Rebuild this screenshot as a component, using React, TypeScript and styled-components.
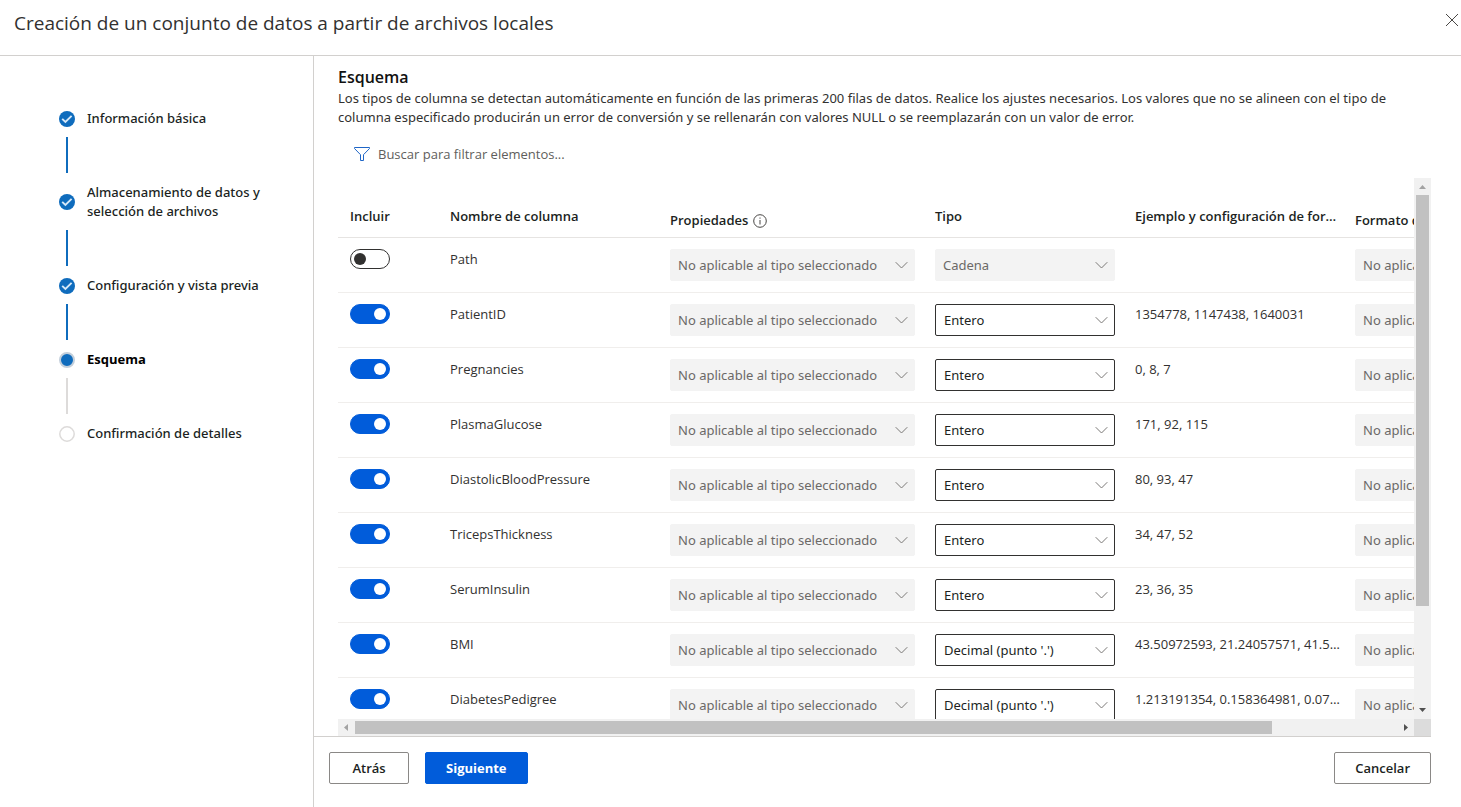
import React, { useId } from "react";
import styled, { createGlobalStyle, css } from "styled-components";

const wideText = `"Noto Sans", "Open Sans", sans-serif`;

const GlobalStyle = createGlobalStyle`
  *, *::before, *::after { box-sizing: border-box; }
  body {
    margin: 0;
    background: #fff;
    color: #323130;
    font-family: "Open Sans", "Noto Sans", sans-serif;
    font-size: 13px;
    line-height: 19px;
  }
  button, input, select { font: inherit; color: inherit; }
`;

const Page = styled.div`
  display: flex;
  flex-direction: column;
  height: 100vh;
  overflow: hidden;
`;

const Header = styled.header`
  display: flex;
  justify-content: space-between;
  align-items: flex-start;
  flex: none;
  height: 56px;
  padding: 9px 0 0 14px;
  border-bottom: 1px solid #d2d0ce;
`;

const Title = styled.h1`
  margin: 0;
  font-size: 19px;
  line-height: 28px;
  font-weight: 400;
`;

const CloseButton = styled.button`
  display: flex;
  padding: 4px 2px;
  border: 0;
  background: none;
`;

const Body = styled.div`
  display: flex;
  flex: 1;
  min-height: 0;
`;

const Sidebar = styled.nav`
  flex: none;
  width: 314px;
  padding: 53px 40px 0 59px;
  border-right: 1px solid #d2d0ce;
`;

const Steps = styled.ol`
  margin: 0;
  padding: 0;
  list-style: none;
`;

type StepState = "done" | "current" | "todo";

const Step = styled.li<{ $state: StepState }>`
  display: grid;
  grid-template-columns: 16px 1fr;
  column-gap: 12px;
  align-items: center;
  color: ${(p) => (p.$state === "current" ? "#000" : "#201f1e")};
  font-weight: ${(p) => (p.$state === "current" ? 700 : 500)};
  font-family: ${(p) => (p.$state === "current" ? "inherit" : wideText)};

  &:not(:last-child)::after {
    content: "";
    justify-self: center;
    width: 2px;
    height: 36px;
    margin: 9px 0 10px;
    background: ${(p) => (p.$state === "done" ? "#0f6cbd" : "#dddbda")};
  }
`;

const StepDot = styled.svg`
  display: block;
  width: 16px;
  height: 16px;
`;

const Main = styled.main`
  display: flex;
  flex-direction: column;
  flex: 1;
  min-width: 0;
  padding-right: 30px;
`;

const Content = styled.section`
  display: flex;
  flex-direction: column;
  flex: 1;
  min-height: 0;
  padding: 10px 0 0 24px;
`;

const Heading = styled.h2`
  margin: 0;
  font-size: 16px;
  line-height: 23px;
  font-weight: 600;
  color: #111;
`;

const Description = styled.p`
  margin: 0;
  font-family: ${wideText};
`;

const Filter = styled.label`
  display: flex;
  align-items: center;
  gap: 8px;
  flex: none;
  height: 32px;
  margin: 11px 0 8px;
  padding-left: 16px;
`;

const FilterInput = styled.input`
  width: 240px;
  padding: 0;
  border: 0;
  outline: 0;
  background: none;

  &::placeholder { color: #605e5c; opacity: 1; }
`;

const ScrollArea = styled.div`
  display: grid;
  grid-template: minmax(0, 1fr) 17px / minmax(0, 1fr) 17px;
  flex: 1;
  min-height: 0;
`;

const Viewport = styled.div`
  overflow: auto;
  scrollbar-width: none;
`;

const Track = styled.div<{ $vertical?: boolean }>`
  display: flex;
  flex-direction: ${(p) => (p.$vertical ? "column" : "row")};
  padding: ${(p) => (p.$vertical ? "0 2px" : "2px 0")};
  background: #f1f1f1;
`;

const Arrow = styled.svg`
  flex: none;
  width: 17px;
  height: 17px;
  align-self: center;
`;

const Rail = styled.div`
  display: flex;
  flex-direction: inherit;
  flex: 1;
`;

const Thumb = styled.div<{ $share: number }>`
  flex: 0 0 ${(p) => p.$share}%;
  background: #c1c1c1;
`;

const Corner = styled.div`
  background: #dcdcdc;
`;

const Table = styled.table`
  width: 100%;
  min-width: 1225px;
  table-layout: fixed;
  border-collapse: separate;
  border-spacing: 0;
`;

const Col = styled.col<{ $width: number }>`
  width: ${(p) => p.$width}px;
`;

const HeadCell = styled.th<{ $low?: boolean }>`
  height: 60px;
  padding: ${(p) => (p.$low ? "33px" : "29px")} 2px 0 12px;
  border-bottom: 1px solid #e6e4e2;
  vertical-align: top;
  text-align: left;
  font-weight: 600;
  color: #201f1e;
  white-space: nowrap;
  overflow: hidden;
  text-overflow: ellipsis;
`;

const HeadLabel = styled.span`
  display: flex;
  align-items: center;
  gap: 5px;
`;

const Cell = styled.td`
  height: 55px;
  padding: 11px 8px 0 12px;
  border-bottom: 1px solid #f0eeec;
  vertical-align: top;
`;

const TextCell = styled(Cell)`
  padding: 12px 2px 0 12px;
  white-space: nowrap;
  overflow: hidden;
  text-overflow: ellipsis;
`;

const Toggle = styled.input`
  appearance: none;
  display: flex;
  align-items: center;
  width: 40px;
  height: 20px;
  margin: 0;
  padding: 0 3px;
  border: 1px solid #323130;
  border-radius: 10px;
  background: #fff;

  &::before {
    content: "";
    width: 12px;
    height: 12px;
    border-radius: 50%;
    background: #323130;
  }

  &:checked {
    justify-content: flex-end;
    border-color: #015cda;
    background: #015cda;
  }

  &:checked::before { background: #fff; }
`;

const SelectBox = styled.div`
  position: relative;
`;

const NativeSelect = styled.select`
  appearance: none;
  display: block;
  width: 100%;
  height: 32px;
  padding: 0 28px 0 8px;
  border: 1px solid #323130;
  border-radius: 2px;
  background: #fff;
  color: #201f1e;
  font-family: ${wideText};

  &:disabled {
    padding-left: 7px;
    border-color: #f3f3f3;
    background: #f3f3f3;
    color: #6b6967;
    opacity: 1;
  }
`;

const Chevron = styled.svg`
  position: absolute;
  top: 10px;
  right: 7px;
  width: 13px;
  height: 12px;
  pointer-events: none;
`;

const Footer = styled.footer`
  display: flex;
  gap: 16px;
  flex: none;
  height: 71px;
  padding: 15px 0 0 15px;
  border-top: 1px solid #d2d0ce;
`;

const Button = styled.button<{ $primary?: boolean; $end?: boolean }>`
  height: 32px;
  min-width: 80px;
  padding: 0 20px;
  border: 1px solid #8a8886;
  border-radius: 2px;
  background: #fff;
  color: #201f1e;
  font-weight: 600;
  ${(p) => p.$end && css`margin-left: auto;`}
  ${(p) =>
    p.$primary &&
    css`
      border-color: #015cda;
      background: #015cda;
      color: #fff;
      font-weight: 700;
    `}
`;

const steps: { label: string; state: StepState }[] = [
  { label: "Información básica", state: "done" },
  { label: "Almacenamiento de datos y selección de archivos", state: "done" },
  { label: "Configuración y vista previa", state: "done" },
  { label: "Esquema", state: "current" },
  { label: "Confirmación de detalles", state: "todo" },
];

const NOT_APPLICABLE = "No aplicable al tipo seleccionado";

const rows = [
  { name: "Path", type: "Cadena", sample: "", included: false },
  { name: "PatientID", type: "Entero", sample: "1354778, 1147438, 1640031", included: true },
  { name: "Pregnancies", type: "Entero", sample: "0, 8, 7", included: true },
  { name: "PlasmaGlucose", type: "Entero", sample: "171, 92, 115", included: true },
  { name: "DiastolicBloodPressure", type: "Entero", sample: "80, 93, 47", included: true },
  { name: "TricepsThickness", type: "Entero", sample: "34, 47, 52", included: true },
  { name: "SerumInsulin", type: "Entero", sample: "23, 36, 35", included: true },
  { name: "BMI", type: "Decimal (punto '.')", sample: "43.50972593, 21.24057571, 41.51152348", included: true },
  { name: "DiabetesPedigree", type: "Decimal (punto '.')", sample: "1.213191354, 0.158364981, 0.079018568", included: true },
];

function StepIcon({ state }: { state: StepState }) {
  return (
    <StepDot viewBox="0 0 16 16" aria-hidden="true">
      {state === "done" && (
        <>
          <circle cx="8" cy="8" r="8" fill="#0f6cbd" />
          <path d="M3.2 7.800l3.200 3.200 6.200-6.200" fill="none" stroke="#d6e8f8" strokeWidth="1.900" />
        </>
      )}
      {state === "current" && (
        <circle cx="8" cy="8" r="7" fill="#0f6cbd" stroke="#c3cfdb" strokeWidth="2" />
      )}
      {state === "todo" && (
        <circle cx="8" cy="8" r="7.200" fill="#fff" stroke="#dddbda" strokeWidth="1.500" />
      )}
    </StepDot>
  );
}

function Select({ label, value, disabled }: { label: string; value: string; disabled?: boolean }) {
  const id = useId();
  return (
    <SelectBox>
      <NativeSelect id={id} aria-label={label} defaultValue={value} disabled={disabled}>
        <option>{value}</option>
      </NativeSelect>
      <Chevron viewBox="0 0 13 12" aria-hidden="true">
        <path d="M.7 3.200l5.800 5.800 5.800-5.800" fill="none" stroke="#7a7876" />
      </Chevron>
    </SelectBox>
  );
}

export default function App() {
  return (
    <Page>
      <GlobalStyle />
      <Header>
        <Title>Creación de un conjunto de datos a partir de archivos locales</Title>
        <CloseButton type="button" aria-label="Cerrar">
          <svg width="14" height="14" viewBox="0 0 14 14" aria-hidden="true">
            <path d="M1 1l12 12M13 1L1 13" stroke="#4a4846" />
          </svg>
        </CloseButton>
      </Header>
      <Body>
        <Sidebar>
          <Steps>
            {steps.map((s) => (
              <Step key={s.label} $state={s.state} aria-current={s.state === "current" ? "step" : undefined}>
                <StepIcon state={s.state} />
                <span>{s.label}</span>
              </Step>
            ))}
          </Steps>
        </Sidebar>
        <Main>
          <Content>
            <Heading>Esquema</Heading>
            <Description>
              Los tipos de columna se detectan automáticamente en función de las primeras 200 filas de datos. Realice
              los ajustes necesarios. Los valores que no se alineen con el tipo de columna especificado producirán un
              error de conversión y se rellenarán con valores NULL o se reemplazarán con un valor de error.
            </Description>
            <Filter>
              <svg width="16" height="16" viewBox="0 0 16 16" aria-hidden="true">
                <path d="M.5 1.500h15v1L9.500 8.700v5.800h-3V8.700L.5 2.500z" fill="none" stroke="#1f66c7" />
              </svg>
              <FilterInput type="text" placeholder="Buscar para filtrar elementos..." />
            </Filter>
            <ScrollArea>
              <Viewport>
                <Table>
                  <colgroup>
                    <Col $width={100} />
                    <Col $width={220} />
                    <Col $width={265} />
                    <Col $width={200} />
                    <Col $width={220} />
                    <Col $width={220} />
                  </colgroup>
                  <thead>
                    <tr>
                      <HeadCell>Incluir</HeadCell>
                      <HeadCell>Nombre de columna</HeadCell>
                      <HeadCell $low>
                        <HeadLabel>
                          Propiedades
                          <svg width="14" height="14" viewBox="0 0 14 14" aria-hidden="true">
                            <circle cx="7" cy="7" r="6.300" fill="none" stroke="#484644" />
                            <path d="M7 6v4.500M7 3.500v1.200" stroke="#484644" />
                          </svg>
                        </HeadLabel>
                      </HeadCell>
                      <HeadCell>Tipo</HeadCell>
                      <HeadCell>Ejemplo y configuración de formato</HeadCell>
                      <HeadCell $low>Formato de fecha</HeadCell>
                    </tr>
                  </thead>
                  <tbody>
                    {rows.map((r) => (
                      <tr key={r.name}>
                        <Cell>
                          <Toggle type="checkbox" role="switch" aria-label={`Incluir ${r.name}`} defaultChecked={r.included} />
                        </Cell>
                        <TextCell>{r.name}</TextCell>
                        <Cell>
                          <Select label={`Propiedades de ${r.name}`} value={NOT_APPLICABLE} disabled />
                        </Cell>
                        <Cell>
                          <Select label={`Tipo de ${r.name}`} value={r.type} disabled={!r.included} />
                        </Cell>
                        <TextCell>{r.sample}</TextCell>
                        <Cell>
                          <Select label={`Formato de ${r.name}`} value={NOT_APPLICABLE} disabled />
                        </Cell>
                      </tr>
                    ))}
                  </tbody>
                </Table>
              </Viewport>
              <Track $vertical aria-hidden="true">
                <Arrow viewBox="0 0 17 17">
                  <path d="M5 11h7L8.500 7z" fill="#a3a3a3" />
                </Arrow>
                <Rail>
                  <Thumb $share={81} />
                </Rail>
                <Arrow viewBox="0 0 17 17">
                  <path d="M5 6h7l-3.500 4z" fill="#505050" />
                </Arrow>
              </Track>
              <Track aria-hidden="true">
                <Arrow viewBox="0 0 17 17">
                  <path d="M10 5v7L6 8.500z" fill="#a3a3a3" />
                </Arrow>
                <Rail>
                  <Thumb $share={88} />
                </Rail>
                <Arrow viewBox="0 0 17 17">
                  <path d="M7 5v7l4-3.500z" fill="#505050" />
                </Arrow>
              </Track>
              <Corner />
            </ScrollArea>
          </Content>
          <Footer>
            <Button type="button">Atrás</Button>
            <Button type="button" $primary>Siguiente</Button>
            <Button type="button" $end>Cancelar</Button>
          </Footer>
        </Main>
      </Body>
    </Page>
  );
}
